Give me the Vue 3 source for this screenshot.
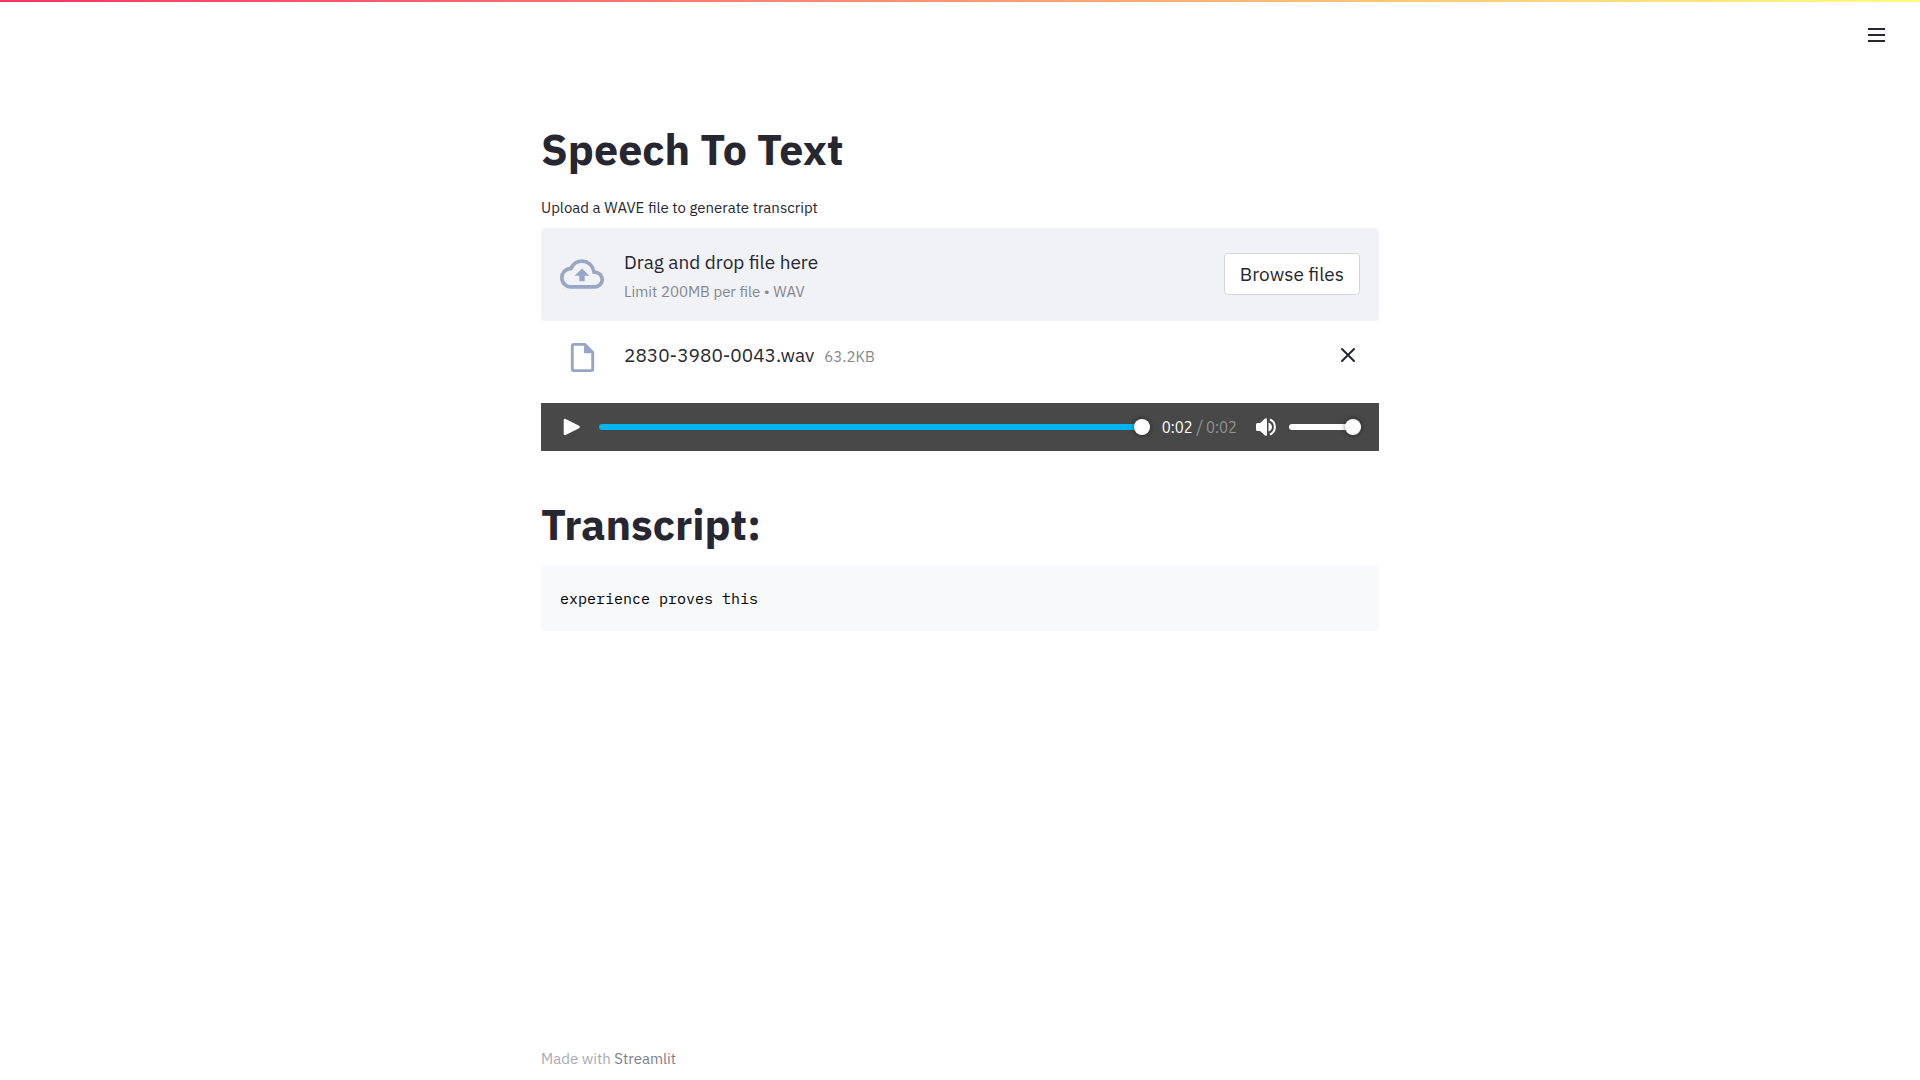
<script setup>
import { ref } from 'vue'

const position = ref(100)
const volume = ref(100)
const transcript = 'experience proves this'
</script>

<template>
  <div class="app">
    <div class="decoration"></div>
    <header class="toolbar">
      <button class="icon-button" type="button" aria-label="Main menu">
        <svg width="18" height="16" viewBox="0 0 18 16" aria-hidden="true">
          <path d="M0 2h17M0 8h17M0 14h17" stroke="#262730" stroke-width="2" />
        </svg>
      </button>
    </header>

    <main class="column">
      <h1>Speech To Text</h1>

      <label class="caption" for="browse">Upload a WAVE file to generate transcript</label>
      <section class="dropzone">
        <svg class="cloud" viewBox="0 0 24 24" aria-hidden="true">
          <path d="M19.35 10.04A7.49 7.49 0 0012 4C9.11 4 6.6 5.64 5.35 8.04A5.994 5.994 0 000 14c0 3.31 2.69 6 6 6h13c2.76 0 5-2.24 5-5 0-2.64-2.05-4.78-4.65-4.96zM19 18H6c-2.21 0-4-1.79-4-4 0-2.05 1.53-3.76 3.56-3.97l1.07-.11.5-.95A5.469 5.469 0 0112 6c2.62 0 4.88 1.86 5.39 4.43l.3 1.5 1.53.11A2.98 2.98 0 0122 15c0 1.65-1.35 3-3 3zM8 13h2.55v3h2.9v-3H16l-4-4-4 4z" />
        </svg>
        <div class="instructions">
          <span class="lead">Drag and drop file here</span>
          <span class="hint">Limit 200MB per file • WAV</span>
        </div>
        <button id="browse" class="browse" type="button">Browse files</button>
      </section>

      <div class="file">
        <span class="file-icon">
          <svg width="35" height="35" viewBox="0 0 24 24" aria-hidden="true">
            <path d="M14 2H6c-1.1 0-2 .9-2 2v16c0 1.1.9 2 2 2h12c1.1 0 2-.9 2-2V8l-6-6zM6 20V4h7v5h5v11H6z" />
          </svg>
        </span>
        <div class="file-text">
          <span class="file-name">2830-3980-0043.wav</span>
          <span class="file-size">63.2KB</span>
        </div>
        <button class="icon-button remove" type="button" aria-label="Remove file">
          <svg width="24" height="24" viewBox="0 0 24 24" aria-hidden="true">
            <path d="M6 6l12 12M18 6L6 18" stroke="#262730" stroke-width="2" stroke-linecap="round" />
          </svg>
        </button>
      </div>

      <div class="player">
        <button class="icon-button" type="button" aria-label="Play">
          <svg width="18" height="18" viewBox="0 0 18 18" aria-hidden="true">
            <path d="M2 2.200v13.600L15.500 9z" fill="#fff" stroke="#fff" stroke-width="2.600" stroke-linejoin="round" />
          </svg>
        </button>
        <input v-model="position" class="slider seek" type="range" min="0" max="100" aria-label="Position" />
        <span class="time">0:02<span class="total"> / 0:02</span></span>
        <button class="icon-button" type="button" aria-label="Mute">
          <svg width="20" height="18" viewBox="0 0 20 18" aria-hidden="true">
            <path d="M1.500 5H4l5-4.500q2-1 2 1v15q0 2-2 1L4 13H1.500Q0 13 0 11.500v-5Q0 5 1.500 5z" fill="#fff" />
            <path d="M12.500 4.500q3.500 1.500 3.500 4.500t-3.500 4.500z" fill="#fff" />
            <path d="M14 1.500c6.500 3 6.500 12 0 15" fill="none" stroke="#fff" stroke-width="2" />
          </svg>
        </button>
        <input v-model="volume" class="slider volume" type="range" min="0" max="100" aria-label="Volume" />
      </div>

      <h1>Transcript:</h1>
      <pre class="code"><code>{{ transcript }}</code></pre>
    </main>

    <footer class="column footer">Made with <a href="#">Streamlit</a></footer>
  </div>
</template>

<style>
body {
  margin: 0;
  background: #fff;
}
</style>

<style scoped>
.app {
  display: flex;
  flex-direction: column;
  min-height: 100vh;
  color: #262730;
  font-family: "IBM Plex Sans", Roboto, sans-serif;
  font-size: 19px;
  line-height: 28px;
}
.decoration {
  height: 2px;
  background: linear-gradient(90deg, #f63366, #fffd80);
}
.toolbar {
  display: flex;
  justify-content: flex-end;
  padding: 25px 34px 0;
}
.icon-button {
  display: flex;
  align-items: center;
  padding: 0;
  border: 0;
  background: none;
  cursor: pointer;
}
.column {
  box-sizing: border-box;
  width: 100%;
  max-width: 838px;
  margin: 0 auto;
}
main.column {
  display: flex;
  flex-direction: column;
  padding-top: 79px;
}
h1 {
  margin: 0;
  font-size: 43px;
  font-weight: 700;
  line-height: 54px;
}
.caption {
  margin: 20px 0 8px;
  font-size: 15px;
  line-height: 24px;
}
.dropzone {
  display: flex;
  align-items: center;
  gap: 20px;
  padding: 16px 19px 18px;
  border-radius: 4px;
  background: #f0f2f6;
}
svg {
  flex: none;
}
.cloud {
  width: 44px;
  height: 44px;
}
.cloud,
.file-icon {
  fill: #97a6c3;
}
.instructions {
  display: flex;
  flex: 1;
  flex-direction: column;
}
.lead {
  line-height: 36px;
}
.hint,
.file-size {
  color: #85878c;
  font-size: 15px;
}
.hint {
  line-height: 23px;
}
.browse {
  padding: 6px 15px;
  border: 1px solid #d3d5da;
  border-radius: 4px;
  background: #fff;
  color: inherit;
  font: inherit;
  cursor: pointer;
}
.file {
  display: flex;
  align-items: flex-start;
  padding: 19px 19px 28px;
}
.file-icon {
  display: flex;
  justify-content: center;
  width: 44px;
  margin-right: 20px;
}
.file-text {
  display: flex;
  align-items: baseline;
  gap: 10px;
  line-height: 30px;
}
.remove {
  height: 30px;
  margin-left: auto;
}
.player {
  display: flex;
  align-items: center;
  height: 48px;
  margin-bottom: 46px;
  padding: 0 18px 0 22px;
  background: #484848;
}
.slider {
  appearance: none;
  height: 6px;
  margin: 0;
  border-radius: 3px;
  background: #fff;
}
.slider::-webkit-slider-thumb {
  appearance: none;
  width: 16px;
  height: 16px;
  border-radius: 50%;
  background: #fff;
  box-shadow: 0 0 5px rgba(0, 0, 0, 0.5);
}
.seek {
  flex: 1;
  min-width: 0;
  margin: 0 12px 0 18px;
  background: #00b6f0;
}
.volume {
  width: 72px;
  margin-left: 13px;
}
.time {
  margin-right: 19px;
  color: #fff;
  font-family: Ubuntu, "Noto Sans", sans-serif;
  font-size: 16px;
  white-space: pre;
}
.total {
  color: #929292;
}
.code {
  margin: 14px 0 0;
  padding: 22px 19px 20px;
  border-radius: 4px;
  background: #f8f9fb;
  color: #000;
  font-size: 15px;
  line-height: 24px;
}
.code code {
  font-family: "IBM Plex Mono", "Liberation Mono", monospace;
}
.footer {
  margin-top: auto;
  padding: 19px 0 9px;
  color: #a9aab0;
  font-size: 15px;
  line-height: 24px;
}
.footer a {
  color: #7d7e8a;
  text-decoration: none;
}
</style>
